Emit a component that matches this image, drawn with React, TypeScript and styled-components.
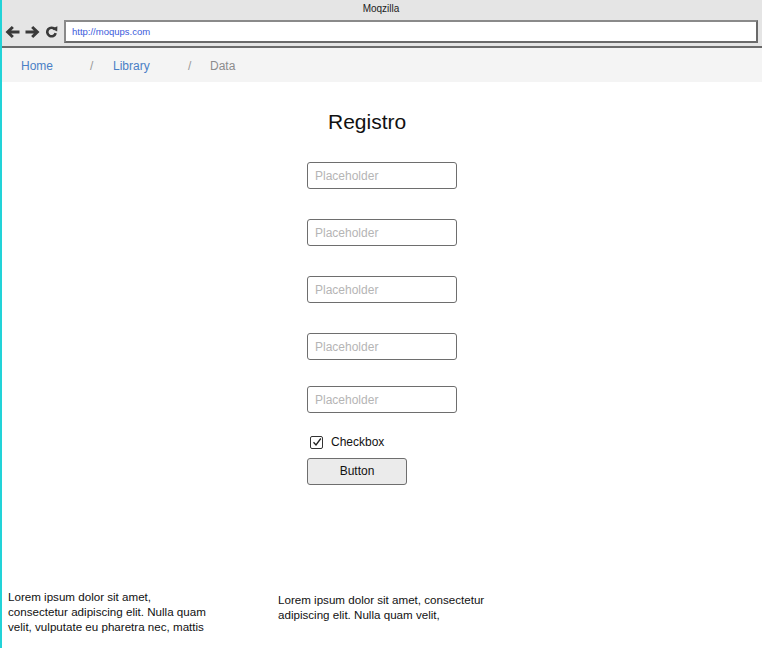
import React from "react";
import styled, { createGlobalStyle } from "styled-components";

const Global = createGlobalStyle`
  html, body { margin: 0; padding: 0; background: #fff; }
  body { font-family: "Liberation Sans", Arial, sans-serif; }
  * { box-sizing: border-box; }
`;

const Page = styled.div`
  width: 762px;
  height: 648px;
  border-left: 2px solid #22d3d8;
  display: flex;
  flex-direction: column;
  overflow: hidden;
`;

const TitleBar = styled.div`
  height: 17px;
  background: #e5e5e5;
  font-size: 10px;
  color: #222;
  display: flex;
  align-items: center;
  justify-content: center;
  padding-right: 2px;
`;

const Toolbar = styled.div`
  height: 31px;
  background: #e5e5e5;
  display: flex;
  align-items: flex-start;
  padding: 3px 4px 0 3px;
  border-bottom: 2px solid #6b6b6b;
`;

const NavIcons = styled.div`
  display: flex;
  align-items: center;
  gap: 5px;
  width: 59px;
  height: 23px;
`;

const Address = styled.div`
  flex: 1;
  height: 23px;
  background: #fff;
  border-style: solid;
  border-width: 2px;
  border-color: #8a8a8a #6a6a6a #6a6a6a #8a8a8a;
  display: flex;
  align-items: center;
  padding-left: 6px;
  font-size: 9.5px;
  color: #3b5bdb;
`;

const NavBar = styled.div`
  height: 34px;
  background: #f4f4f4;
  display: flex;
  align-items: center;
  font-size: 12px;
  padding: 2px 0 0 19px;
`;

const Crumb = styled.span<{ $active?: boolean; $w: number }>`
  color: ${(p) => (p.$active ? "#8c8c8c" : "#4a7fc6")};
  width: ${(p) => p.$w}px;
`;

const Sep = styled.span<{ $w: number }>`
  color: #999;
  width: ${(p) => p.$w}px;
`;

const Main = styled.div`
  flex: 1;
  display: flex;
  flex-direction: column;
  align-items: center;
  padding-top: 28px;
`;

const Form = styled.div`
  width: 150px;
  display: flex;
  flex-direction: column;
  align-items: flex-start;
`;

const Title = styled.h1`
  margin: 0 0 0 21px;
  font-size: 21px;
  font-weight: normal;
  color: #111;
  line-height: 24px;
  height: 24px;
`;

const Input = styled.input<{ $mt: number }>`
  width: 150px;
  height: 27px;
  margin-top: ${(p) => p.$mt}px;
  border: 1px solid #6e6e6e;
  border-radius: 3px;
  padding: 0 7px;
  font-family: "Liberation Sans", Arial, sans-serif;
  font-size: 12px;
  outline: none;
  &::placeholder { color: #b5b5b5; }
`;

const CheckRow = styled.label`
  margin-top: 21px;
  display: flex;
  align-items: center;
  gap: 8px;
  padding-left: 3px;
  font-size: 12px;
  color: #111;
  height: 16px;
`;

const Box = styled.span`
  width: 13px;
  height: 13px;
  border: 1px solid #333;
  border-radius: 2px;
  display: flex;
  align-items: center;
  justify-content: center;
  background: #fff;
`;

const Button = styled.button`
  margin-top: 8px;
  width: 100px;
  height: 27px;
  padding: 0 0 1px;
  background: #ebebeb;
  border: 1px solid #6e6e6e;
  border-radius: 3px;
  font-family: "Liberation Sans", Arial, sans-serif;
  font-size: 12px;
  color: #111;
`;

const Footer = styled.div`
  display: flex;
  align-items: flex-start;
  padding: 0 0 14px 6px;
  gap: 68px;
`;

const Para = styled.p<{ $w: number; $mt: number }>`
  margin: ${(p) => p.$mt}px 0 0 0;
  width: ${(p) => p.$w}px;
  font-size: 11.6px;
  line-height: 15px;
  color: #111;
`;

const Arrow = ({ dir }: { dir: "l" | "r" }) => (
  <svg width="15" height="14" viewBox="0 0 15 14">
    <g transform={dir === "r" ? "translate(15,0) scale(-1,1)" : undefined}>
      <path d="M0.5 7 L6.8 1 L8.9 3.1 L6.2 5.5 H14.5 V8.5 H6.2 L8.9 10.9 L6.8 13 Z" fill="#3a3a3a" />
    </g>
  </svg>
);

const Refresh = () => (
  <svg width="13" height="13" viewBox="0 0 13 13">
    <path d="M10 4.4 A4.3 4.3 0 1 0 10.7 8.2" fill="none" stroke="#3a3a3a" strokeWidth="2.6" />
    <path d="M6.8 3.8 L12.4 1.2 L12.2 6.6 Z" fill="#3a3a3a" />
  </svg>
);

const Check = () => (
  <svg width="10" height="10" viewBox="0 0 10 10">
    <path d="M1.5 5.2 L4 8 L8.8 1.5" fill="none" stroke="#222" strokeWidth="1.3" />
  </svg>
);

export default function App() {
  return (
    <>
      <Global />
      <Page>
        <TitleBar>Moqzilla</TitleBar>
        <Toolbar>
          <NavIcons>
            <Arrow dir="l" />
            <Arrow dir="r" />
            <Refresh />
          </NavIcons>
          <Address>http://moqups.com</Address>
        </Toolbar>
        <NavBar>
          <Crumb $w={69}>Home</Crumb>
          <Sep $w={23}>/</Sep>
          <Crumb $w={75}>Library</Crumb>
          <Sep $w={22}>/</Sep>
          <Crumb $active $w={40}>Data</Crumb>
        </NavBar>
        <Main>
          <Form>
            <Title>Registro</Title>
            <Input $mt={28} placeholder="Placeholder" />
            <Input $mt={30} placeholder="Placeholder" />
            <Input $mt={30} placeholder="Placeholder" />
            <Input $mt={30} placeholder="Placeholder" />
            <Input $mt={26} placeholder="Placeholder" />
            <CheckRow>
              <Box><Check /></Box>
              Checkbox
            </CheckRow>
            <Button>Button</Button>
          </Form>
        </Main>
        <Footer>
          <Para $w={202} $mt={0}>
            Lorem ipsum dolor sit amet, consectetur adipiscing elit. Nulla quam velit, vulputate eu pharetra nec, mattis
          </Para>
          <Para $w={215} $mt={3}>
            Lorem ipsum dolor sit amet, consectetur adipiscing elit. Nulla quam velit,
          </Para>
        </Footer>
      </Page>
    </>
  );
}
